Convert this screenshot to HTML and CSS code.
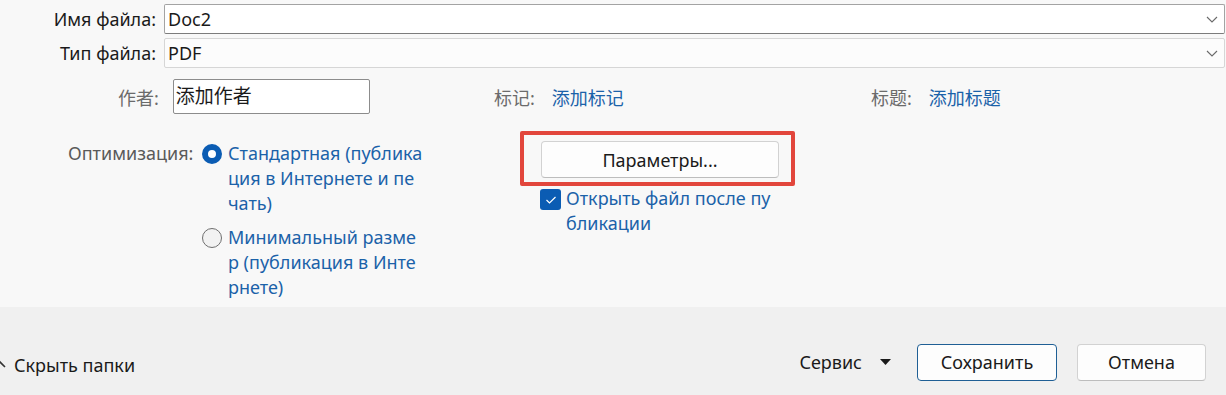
FILE: index.html
```html
<!DOCTYPE html>
<html lang="ru">
<head>
    <meta charset="utf-8">
    <meta name="viewport" content="width=device-width, initial-scale=1.0">
    <title>Сохранить как</title>
    <link rel="stylesheet" href="styles.css">
</head>

<body>
    <div class="dialog">
        <main class="main">
            <div class="filerow">
                <label class="filelabel">Имя файла:</label>
                <div class="combo combo-name">
                    <span>Doc2</span>
                    <svg class="chev" width="12" height="7" viewBox="0 0 12 7"><path d="M1 1 L6 6 L11 1" fill="none" stroke="#6a6a6a" stroke-width="1.1"/></svg>
                </div>
            </div>
            <div class="filerow">
                <label class="filelabel">Тип файла:</label>
                <div class="combo combo-type">
                    <span>PDF</span>
                    <svg class="chev" width="12" height="7" viewBox="0 0 12 7"><path d="M1 1 L6 6 L11 1" fill="none" stroke="#6a6a6a" stroke-width="1.1"/></svg>
                </div>
            </div>

            <div class="meta">
                <div class="meta-group group-author">
                    <span class="meta-label author-label">作者:</span>
                    <div class="textbox">添加作者</div>
                </div>
                <div class="meta-group group-tags">
                    <span class="meta-label">标记:</span>
                    <a class="link">添加标记</a>
                </div>
                <div class="meta-group">
                    <span class="meta-label">标题:</span>
                    <a class="link">添加标题</a>
                </div>
            </div>

            <div class="opts">
                <div class="opt-label">Оптимизация:</div>
                <div class="radios">
                    <div class="radio">
                        <span class="dot checked"></span>
                        <span class="radio-text">Стандартная (публика<br>ция в Интернете и пе<br>чать)</span>
                    </div>
                    <div class="radio second">
                        <span class="dot"></span>
                        <span class="radio-text">Минимальный разме<br>р (публикация в Инте<br>рнете)</span>
                    </div>
                </div>
                <div class="params">
                    <div class="highlight">
                        <button class="btn btn-params">Параметры...</button>
                    </div>
                    <div class="check">
                        <span class="box"><svg width="12" height="10" viewBox="0 0 12 10"><path d="M1.5 5 L4.5 8 L10.5 2" fill="none" stroke="#fff" stroke-width="1.2"/></svg></span>
                        <span class="check-text">Открыть файл после пу<br>бликации</span>
                    </div>
                </div>
            </div>
        </main>

        <footer class="footer">
            <svg class="hide-chev" width="12" height="8" viewBox="0 0 12 8"><path d="M1 7 L6 2 L11 7" fill="none" stroke="#333" stroke-width="1.6"/></svg>
            <span class="hide-folders">Скрыть папки</span>
            <div class="actions">
                <span class="tools">Сервис</span>
                <svg class="tri" width="11" height="6" viewBox="0 0 11 6"><path d="M0 0 L11 0 L5.5 6 Z" fill="#1a1a1a"/></svg>
                <button class="btn btn-save">Сохранить</button>
                <button class="btn btn-cancel">Отмена</button>
            </div>
        </footer>
    </div>
</body>
</html>
```

FILE: styles.css
```css
* {
    box-sizing: border-box;
}

body {
    margin: 0;
    width: 1226px;
    height: 395px;
    overflow: hidden;
    font-family: "Noto Sans", "Noto Sans CJK SC", sans-serif;
    color: #1a1a1a;
    background-color: #f0f0f0;
}

.main {
    height: 307px;
    padding: 4px 1px 0 0;
    background-color: #f8f8f8;
}

/* file name / type rows */
.filerow {
    display: flex;
    align-items: center;
    margin-bottom: 4px;
}

.filelabel {
    width: 156px;
    text-align: right;
    font-size: 18px;
    margin-right: 8px;
}

.combo {
    flex: 1;
    height: 30px;
    display: flex;
    align-items: center;
    justify-content: space-between;
    padding: 0 6px 0 3px;
    font-size: 18px;
    border: 1px solid #c9c9c9;
    border-radius: 2px;
}

.combo-name {
    background-color: #fff;
    border-color: #a3a3a3;
    border-bottom-color: #7c7c7c;
}

.combo-type {
    background-color: #fcfcfc;
    border-color: #d6d6d6;
}

/* author, tags, title */
.meta {
    display: flex;
    align-items: center;
    margin-top: 11px;
    padding-left: 118px;
    font-size: 18px;
}

.meta-group {
    display: flex;
    align-items: center;
}

.group-author {
    width: 376px;
}

.group-tags {
    width: 377px;
}

.meta-label {
    color: #6b6b6b;
    margin-right: 17px;
}

.author-label {
    margin-right: 14px;
}

.textbox {
    width: 197px;
    height: 35px;
    padding: 2px 0 0 2px;
    background-color: #fff;
    border: 1px solid #8c8c8c;
    border-radius: 2px;
    font-size: 19px;
    line-height: 29px;
}

.link {
    color: #1b62a9;
}

/* optimisation block */
.opts {
    display: flex;
    margin-top: 17px;
    padding-left: 68px;
    font-size: 18px;
}

.opt-label {
    width: 134px;
    color: #5a5a5a;
    padding-top: 10px;
    line-height: 25px;
}

.radios {
    width: 318px;
    padding-top: 10px;
}

.radio {
    display: flex;
    align-items: flex-start;
}

.radio.second {
    margin-top: 9px;
}

.dot {
    width: 20px;
    height: 20px;
    margin-top: 3px;
    margin-right: 6px;
    border-radius: 50%;
    border: 1px solid #6f6f6f;
    background-color: #f2f2f2;
    flex-shrink: 0;
}

.dot.checked {
    border: 6px solid #0b5cb3;
    background-color: #fff;
}

.radio-text {
    color: #1b62a9;
    line-height: 25px;
}

.highlight {
    width: 275px;
    height: 55px;
    padding: 6px 10px 0 17px;
    border: 4px solid #e2463c;
    border-radius: 2px;
}

.btn {
    font-family: "Noto Sans", sans-serif;
    font-size: 18px;
    color: #1a1a1a;
    background-color: #fdfdfd;
    border: 1px solid #d2d2d2;
    border-bottom-color: #bdbdbd;
    border-radius: 4px;
}

.btn-params {
    width: 238px;
    height: 37px;
}

.check {
    display: flex;
    align-items: flex-start;
    margin-left: 20px;
}

.box {
    width: 21px;
    height: 21px;
    margin-top: 3px;
    margin-right: 5px;
    border-radius: 3px;
    background-color: #0b5cb3;
    display: flex;
    align-items: center;
    justify-content: center;
}

.check-text {
    color: #1b62a9;
    line-height: 25px;
}

/* footer */
.footer {
    height: 88px;
    display: flex;
    align-items: center;
    padding: 22px 20px 0 0;
    font-size: 18px;
}

.hide-chev {
    margin-left: -6px;
    margin-right: 8px;
    margin-top: 4px;
}

.hide-folders {
    margin-top: 6px;
}

.actions {
    margin-left: auto;
    display: flex;
    align-items: center;
}

.tools {
    margin-right: 18px;
}

.tri {
    margin-right: 26px;
}

.btn-save {
    width: 140px;
    height: 37px;
    border-color: #1f5f95;
    margin-right: 20px;
}

.btn-cancel {
    width: 129px;
    height: 37px;
}
```
